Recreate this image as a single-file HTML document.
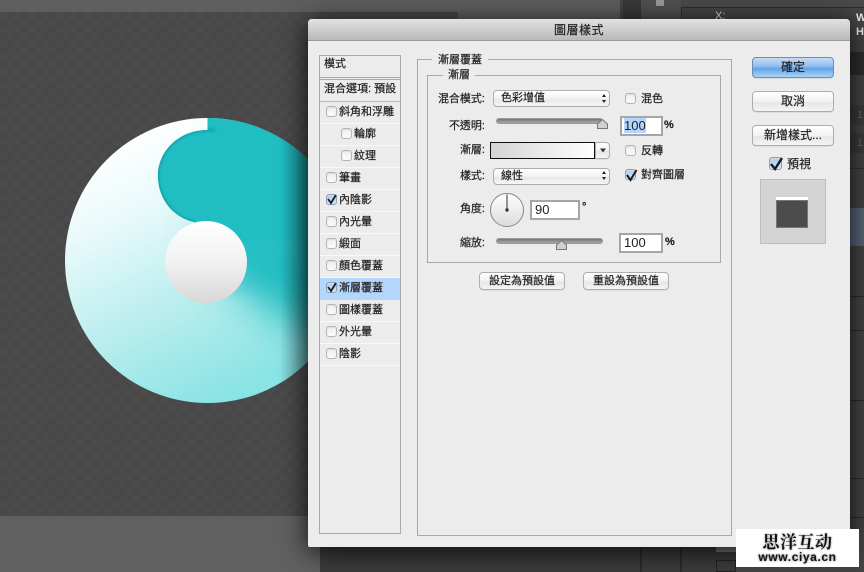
<!DOCTYPE html>
<html><head><meta charset="utf-8">
<style>
html,body{margin:0;padding:0;background:#484848}
#p{position:relative;width:864px;height:572px;overflow:hidden;background:#484848;font-family:"Liberation Sans","Noto Sans CJK TC",sans-serif;font-size:11px;color:#222}
#p div,#p span.a{position:absolute;box-sizing:border-box}
.t{white-space:nowrap;line-height:14px;height:14px;-webkit-text-stroke:.2px #222}
.r{text-align:right}
.row{left:1px;width:79px;height:22px;border-bottom:1px solid #f8f8f8;line-height:21px;white-space:nowrap;-webkit-text-stroke:.2px #222}
.cb{width:11px;height:11px;border:1px solid #b4b4b4;border-radius:3px;background:linear-gradient(#eee,#fafafa);box-shadow:inset 0 1px 1px #ddd}
.cb.on{background:linear-gradient(#a8cdee,#d4e8f8);border-color:#8a9fb8}
.btn{border:1px solid #adadad;border-radius:4px;background:linear-gradient(#fff,#f2f2f2 50%,#e6e6e6 55%,#f4f4f4);text-align:center;white-space:nowrap;-webkit-text-stroke:.2px #222;box-shadow:0 1px 0 #ddd}
.sel{border:1px solid #adadad;border-radius:4px;background:linear-gradient(#fff,#f3f3f3 50%,#e8e8e8 55%,#f6f6f6);white-space:nowrap;-webkit-text-stroke:.2px #222;padding-left:7px}
.inp{background:#fff;border:2px solid #a6a6a6;font-size:13px;line-height:16px;padding-left:2px;color:#222}
.sl{height:6px;border-radius:3px;background:linear-gradient(#777,#a8a8a8);border:1px solid #999}
</style></head>
<body><div id="p">

<!-- top bar & bottom bar -->
<div style="left:0;top:0;width:620px;height:12px;background:#5e5e5e"></div>
<div style="left:458px;top:12px;width:162px;height:8px;background:#5c5c5c"></div>
<div style="left:0;top:12px;width:458px;height:2px;background:#444"></div>

<!-- pattern -->
<svg width="320" height="504" style="position:absolute;left:0;top:12px" xmlns="http://www.w3.org/2000/svg">
<defs><pattern id="pt" width="14" height="14" patternUnits="userSpaceOnUse"><rect width="14" height="14" fill="#484848"/><rect x="0" y="0" width="7" height="7" fill="#4b4b4b"/><rect x="7" y="7" width="7" height="7" fill="#4b4b4b"/></pattern></defs>
<rect width="320" height="504" fill="url(#pt)"/>
</svg>
<div style="left:0;top:514px;width:320px;height:3px;background:#4a4a4a"></div>
<div style="left:0;top:516px;width:320px;height:56px;background:#606060"></div>

<!-- artwork -->
<svg width="320" height="572" style="position:absolute;left:0;top:0" xmlns="http://www.w3.org/2000/svg">
<defs>
<linearGradient id="b" gradientUnits="userSpaceOnUse" x1="140" y1="130" x2="260" y2="380">
<stop offset="0" stop-color="#fff"/><stop offset=".25" stop-color="#eafafb"/><stop offset=".6" stop-color="#bdeeef"/><stop offset="1" stop-color="#8ae3e4"/></linearGradient>
<linearGradient id="t" gradientUnits="userSpaceOnUse" x1="0" y1="235" x2="0" y2="300">
<stop offset="0" stop-color="#20bdc3"/><stop offset="1" stop-color="#20bdc3" stop-opacity="0"/></linearGradient>
<linearGradient id="w" x1="0" y1="0" x2="0" y2="1"><stop offset="0" stop-color="#fff"/><stop offset=".5" stop-color="#f1f1f1"/><stop offset="1" stop-color="#d8d8d8"/></linearGradient>
<linearGradient id="sh" x1="0" y1="0" x2="1" y2="0"><stop offset="0" stop-color="#000" stop-opacity="0"/><stop offset="1" stop-color="#000" stop-opacity=".32"/></linearGradient>
<filter id="bl" x="-20%" y="-20%" width="140%" height="140%"><feGaussianBlur stdDeviation="1.3"/></filter>
<filter id="bb" x="-40%" y="-40%" width="180%" height="180%"><feGaussianBlur stdDeviation="20"/></filter>
<clipPath id="c"><path d="M207.5 118 A142.5 142.5 0 0 1 207.5 403 L206 262 L194 222 C172 217 158 198 158 176 C158 150 180 130 207.5 130 Z"/></clipPath>
<clipPath id="m"><circle cx="207.5" cy="260.5" r="142.5"/></clipPath>
</defs>
<circle cx="207.5" cy="260.5" r="142.5" fill="url(#b)"/>
<g clip-path="url(#m)"><path d="M205 225 L350 225 L350 345 L290 325 L235 285 Z" fill="#20bdc3" filter="url(#bb)"/></g>
<path d="M207.5 118 A142.5 142.5 0 0 1 207.5 403 L206 262 L194 222 C172 217 158 198 158 176 C158 150 180 130 207.5 130 Z" fill="url(#t)"/>
<path d="M207.5 118 A142.5 142.5 0 0 1 335 197 L335 240 L206 240 L194 222 C172 217 158 198 158 176 C158 150 180 130 207.5 130 Z" fill="#20bdc3"/>
<g clip-path="url(#c)"><path d="M215 130 L207 130 C180 130 158 150 158 176 C158 198 172 217 194 222" fill="none" stroke="#0c868c" stroke-opacity=".6" stroke-width="2.6" filter="url(#bl)"/></g>
<circle cx="206" cy="262" r="41" fill="url(#w)"/>
<g clip-path="url(#m)"><rect x="280" y="110" width="28" height="300" fill="url(#sh)"/></g>
</svg>

<!-- right background panels -->
<div style="left:620px;top:0;width:244px;height:572px;background:#444"></div>
<div style="left:623px;top:0;width:18px;height:19px;background:#383838"></div>
<div style="left:641px;top:0;width:40px;height:19px;background:#505050"></div>
<div style="left:656px;top:0;width:8px;height:6px;background:#999"></div>
<div style="left:681px;top:0;width:183px;height:8px;background:#4a4a4a;border-bottom:1px solid #2d2d2d"></div>
<div style="left:681px;top:8px;width:1px;height:12px;background:#2d2d2d"></div>
<div class="t" style="left:715px;top:9px;color:#ddd;-webkit-text-stroke:0">X:</div>
<div class="t" style="left:856px;top:11px;color:#eee;font-weight:bold;-webkit-text-stroke:0">W</div>
<div class="t" style="left:856px;top:25px;color:#eee;font-weight:bold;-webkit-text-stroke:0">H</div>
<div style="left:850px;top:52px;width:14px;height:23px;background:#2e2e2e"></div>
<div style="left:850px;top:105px;width:14px;height:20px;background:#3b3b3b"></div>
<div style="left:850px;top:133px;width:14px;height:20px;background:#3b3b3b"></div>
<div class="t" style="left:857px;top:108px;color:#666;-webkit-text-stroke:0">1</div>
<div class="t" style="left:857px;top:136px;color:#666;-webkit-text-stroke:0">1</div>
<div style="left:850px;top:208px;width:14px;height:38px;background:#56667a"></div>
<div style="left:850px;top:168px;width:14px;height:1px;background:#333"></div>
<div style="left:850px;top:296px;width:14px;height:1px;background:#2a2a2a"></div>
<div style="left:850px;top:330px;width:14px;height:1px;background:#2a2a2a"></div>
<div style="left:850px;top:400px;width:14px;height:1px;background:#2a2a2a"></div>
<div style="left:850px;top:478px;width:14px;height:1px;background:#2a2a2a"></div>
<div style="left:850px;top:517px;width:14px;height:1px;background:#2a2a2a"></div>
<div style="left:320px;top:546px;width:416px;height:26px;background:#3c3c3c"></div>
<div style="left:640px;top:546px;width:2px;height:26px;background:#2c2c2c"></div>
<div style="left:680px;top:546px;width:2px;height:26px;background:#2c2c2c"></div>
<div style="left:716px;top:547px;width:20px;height:5px;background:#777"></div>
<div style="left:716px;top:560px;width:20px;height:12px;border:1px solid #222"></div>

<!-- dialog -->
<div style="left:308px;top:19px;width:542px;height:528px;background:#ececec;border-radius:4px 4px 2px 2px;box-shadow:0 4px 26px rgba(0,0,0,.85)"></div>
<div style="left:308px;top:19px;width:542px;height:22px;background:linear-gradient(#e2e2e2,#b9b9b9);border-radius:4px 4px 0 0;border-bottom:1px solid #999"></div>
<div class="t" style="left:308px;width:542px;top:23px;text-align:center;font-size:12px;letter-spacing:.5px">圖層樣式</div>

<!-- left list -->
<div style="left:319px;top:55px;width:82px;height:479px;border:1px solid #a9a9a9;background:#ececec">
 <div class="t" style="left:4px;top:1px">模式</div>
 <div style="left:0;top:21px;width:80px;height:3px;border-top:1px solid #a9a9a9;border-bottom:1px solid #a9a9a9"></div>
 <div class="row" style="left:0;top:23px;width:80px;height:23px;padding-left:4px;border-bottom:1px solid #bbb;line-height:20px">混合選項: 預設</div>
 <div class="row" style="left:0;top:46px;width:80px;padding-left:19px">斜角和浮雕</div><div class="cb" style="left:6px;top:50px"></div>
 <div class="row" style="left:0;top:68px;width:80px;padding-left:34px">輪廓</div><div class="cb" style="left:21px;top:72px"></div>
 <div class="row" style="left:0;top:90px;width:80px;padding-left:34px">紋理</div><div class="cb" style="left:21px;top:94px"></div>
 <div class="row" style="left:0;top:112px;width:80px;padding-left:19px">筆畫</div><div class="cb" style="left:6px;top:116px"></div>
 <div class="row" style="left:0;top:134px;width:80px;padding-left:19px">內陰影</div><div class="cb on" style="left:6px;top:138px"></div>
 <div class="row" style="left:0;top:156px;width:80px;padding-left:19px">內光暈</div><div class="cb" style="left:6px;top:160px"></div>
 <div class="row" style="left:0;top:178px;width:80px;padding-left:19px">緞面</div><div class="cb" style="left:6px;top:182px"></div>
 <div class="row" style="left:0;top:200px;width:80px;padding-left:19px">顏色覆蓋</div><div class="cb" style="left:6px;top:204px"></div>
 <div class="row" style="left:0;top:222px;width:80px;padding-left:19px;background:#b5d6fc;border-bottom:0">漸層覆蓋</div><div class="cb on" style="left:6px;top:226px"></div>
 <div class="row" style="left:0;top:244px;width:80px;padding-left:19px">圖樣覆蓋</div><div class="cb" style="left:6px;top:248px"></div>
 <div class="row" style="left:0;top:266px;width:80px;padding-left:19px">外光暈</div><div class="cb" style="left:6px;top:270px"></div>
 <div class="row" style="left:0;top:288px;width:80px;padding-left:19px">陰影</div><div class="cb" style="left:6px;top:292px"></div>
</div>
<svg width="864" height="572" style="position:absolute;left:0;top:0;z-index:5;pointer-events:none" xmlns="http://www.w3.org/2000/svg">
<g fill="none" stroke="#1a1a1a" stroke-width="1.8">
<path d="M328 199 l3 4 l5 -8"/>
<path d="M328 287 l3 4 l5 -8"/>
<path d="M627 175 l3.5 5 l6 -10" stroke-width="2"/>
<path d="M771 164 l4 5 l7 -11" stroke-width="2.4"/>
</g>
<path d="M600 148.5 h6 l-3 4 z" fill="#333"/>
<path d="M602 97 l2 -3 l2 3 z M602 100 l2 3 l2 -3 z M602 174 l2 -3 l2 3 z M602 177 l2 3 l2 -3 z" fill="#222"/>
</svg>

<!-- group boxes -->
<div style="left:417px;top:59px;width:315px;height:477px;border:1px solid #a9a9a9"></div>
<div style="left:427px;top:75px;width:294px;height:188px;border:1px solid #a9a9a9"></div>
<div class="t" style="left:432px;top:53px;background:#ececec;padding:0 6px">漸層覆蓋</div>
<div class="t" style="left:443px;top:68px;background:#ececec;padding:0 5px">漸層</div>

<!-- form -->
<div class="t r" style="left:420px;width:65px;top:92px">混合模式:</div>
<div class="t r" style="left:420px;width:65px;top:119px">不透明:</div>
<div class="t r" style="left:420px;width:65px;top:143px">漸層:</div>
<div class="t r" style="left:420px;width:65px;top:169px">樣式:</div>
<div class="t r" style="left:420px;width:65px;top:202px">角度:</div>
<div class="t r" style="left:420px;width:65px;top:236px">縮放:</div>

<div class="sel" style="left:493px;top:90px;width:117px;height:17px;line-height:15px">色彩增值</div>
<div class="sel" style="left:493px;top:168px;width:117px;height:17px;line-height:15px">線性</div>

<div class="sl" style="left:496px;top:118px;width:107px"></div>
<svg width="14" height="12" style="position:absolute;left:596px;top:118px"><path d="M1.5 6 L6.5 1.5 L11.5 6 V10.5 H1.5 Z" fill="#d0d0d0" stroke="#777"/></svg>
<div class="inp" style="left:620px;top:116px;width:43px;height:20px"><span style="background:#b5d6fc">100</span></div>
<div class="t" style="left:664px;top:118px;font-size:11px;font-weight:bold">%</div>

<div style="left:490px;top:142px;width:105px;height:17px;border:1px solid #111;background:linear-gradient(90deg,#d4d4d4,#fff)"></div>
<div class="btn" style="left:595px;top:142px;width:15px;height:17px;border-radius:0 4px 4px 0"></div>

<div class="cb" style="left:625px;top:93px"></div><div class="t" style="left:641px;top:92px">混色</div>
<div class="cb" style="left:625px;top:145px"></div><div class="t" style="left:641px;top:144px">反轉</div>
<div class="cb on" style="left:625px;top:169px"></div><div class="t" style="left:641px;top:168px">對齊圖層</div>

<svg width="36" height="36" style="position:absolute;left:489px;top:192px">
<defs><linearGradient id="d" x1="0" y1="0" x2="0" y2="1"><stop offset="0" stop-color="#fff"/><stop offset="1" stop-color="#dcdcdc"/></linearGradient></defs>
<circle cx="18" cy="18" r="16.5" fill="url(#d)" stroke="#888"/><path d="M18 18 V2.5" stroke="#333"/><circle cx="18" cy="18" r="1.7" fill="#333"/></svg>
<div class="inp" style="left:530px;top:200px;width:50px;height:20px;padding-left:3px">90</div>
<div class="t" style="left:582px;top:200px;font-weight:bold">°</div>

<div class="sl" style="left:496px;top:238px;width:107px"></div>
<svg width="14" height="12" style="position:absolute;left:555px;top:239px"><path d="M1.5 6 L6.5 1.5 L11.5 6 V10.5 H1.5 Z" fill="#d0d0d0" stroke="#777"/></svg>
<div class="inp" style="left:619px;top:233px;width:44px;height:20px;padding-left:3px">100</div>
<div class="t" style="left:665px;top:235px;font-weight:bold">%</div>

<div class="btn" style="left:479px;top:272px;width:86px;height:18px;line-height:16px">設定為預設值</div>
<div class="btn" style="left:583px;top:272px;width:86px;height:18px;line-height:16px">重設為預設值</div>

<!-- right buttons -->
<div class="btn" style="left:752px;top:57px;width:82px;height:21px;line-height:19px;font-size:12px;border-color:#6a8eb4;background:linear-gradient(#c6dcf4,#8dbcee 45%,#62a3e8 55%,#a9d4f8)">確定</div>
<div class="btn" style="left:752px;top:91px;width:82px;height:21px;line-height:19px;font-size:12px">取消</div>
<div class="btn" style="left:752px;top:125px;width:82px;height:21px;line-height:19px;font-size:12px">新增樣式...</div>
<div class="cb on" style="left:769px;top:157px;width:13px;height:13px"></div>
<div class="t" style="left:787px;top:156px;font-size:12px;line-height:16px;height:16px">預視</div>
<div style="left:760px;top:179px;width:66px;height:65px;background:#d4d4d4;border:1px solid #bcbcbc"></div>
<div style="left:776px;top:197px;width:32px;height:3px;background:#fff"></div>
<div style="left:776px;top:200px;width:32px;height:28px;background:#4c4c4c;border:1px solid #777"></div>

<!-- watermark -->
<div style="left:736px;top:529px;width:123px;height:38px;background:#fff;z-index:6"></div>
<div class="t" style="left:736px;width:123px;top:534px;height:18px;line-height:18px;text-align:center;z-index:7;font-family:'Liberation Serif','Noto Serif CJK SC',serif;font-size:17px;font-weight:bold;color:#111;letter-spacing:.5px;-webkit-text-stroke:0;text-shadow:0 0 2px #888">思洋互动</div>
<div class="t" style="left:736px;width:123px;top:550px;text-align:center;z-index:7;font-size:12px;font-weight:bold;color:#111;letter-spacing:.6px;-webkit-text-stroke:0;text-shadow:0 0 2px #666">www.ciya.cn</div>

</div></body></html>
